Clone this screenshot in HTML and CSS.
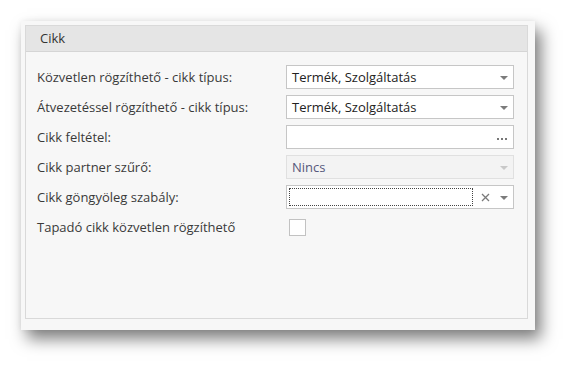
FILE: index.html
```html
<!DOCTYPE html>
<html lang="hu">
<head>
  <meta charset="UTF-8" />
  <title>Cikk beállítások</title>
  <link rel="stylesheet" href="styles.css">
</head>
<body>
  <div class="window">
    <div class="group">
      <div class="group-header">Cikk</div>
      <div class="form">
        <label class="label">Közvetlen rögzíthető - cikk típus:</label>
        <div class="field">
          <span class="value">Termék, Szolgáltatás</span>
          <span class="arrow"></span>
        </div>

        <label class="label">Átvezetéssel rögzíthető - cikk típus:</label>
        <div class="field">
          <span class="value">Termék, Szolgáltatás</span>
          <span class="arrow"></span>
        </div>

        <label class="label">Cikk feltétel:</label>
        <div class="field">
          <span class="value"></span>
          <span class="dots"><i></i><i></i><i></i></span>
        </div>

        <label class="label">Cikk partner szűrő:</label>
        <div class="field disabled">
          <span class="value">Nincs</span>
          <span class="arrow"></span>
        </div>

        <label class="label">Cikk göngyöleg szabály:</label>
        <div class="field focused">
          <span class="value focus-rect"></span>
          <span class="clear">
            <svg width="9" height="9" viewBox="0 0 9 9"><path d="M1 1 L8 8 M8 1 L1 8" stroke="#7a7a7a" stroke-width="1.3" fill="none"/></svg>
          </span>
          <span class="arrow"></span>
        </div>

        <label class="label">Tapadó cikk közvetlen rögzíthető</label>
        <div class="check-cell">
          <span class="checkbox"></span>
        </div>
      </div>
    </div>
  </div>
</body>
</html>
```

FILE: styles.css
```css
* {
  box-sizing: border-box;
  margin: 0;
  padding: 0;
}

html,
body {
  height: 100%;
}

body {
  background: #fff;
  font-family: "Open Sans", "Noto Sans", sans-serif;
  font-size: 13px;
  color: #3a3a3a;
  padding: 21px 0 0 21px;
}

.window {
  width: 514px;
  height: 309px;
  background: #f7f7f7;
  padding: 4px 7px 11px 4px;
  box-shadow: 6px 9px 15px rgba(0, 0, 0, 0.5), 0 0 6px rgba(0, 0, 0, 0.06);
}

.group {
  height: 100%;
  border: 1px solid #d9d9d9;
  background: #f7f7f7;
}

.group-header {
  height: 26px;
  background: #e5e5e5;
  border-bottom: 1px solid #d5d5d5;
  padding: 3px 0 0 14px;
  color: #333;
}

.form {
  display: grid;
  grid-template-columns: 249px 228px;
  grid-auto-rows: 24px;
  row-gap: 6px;
  padding: 13px 0 0 11px;
}

.label {
  display: flex;
  align-items: center;
  white-space: nowrap;
}

.field {
  display: flex;
  align-items: center;
  background: #fff;
  border: 1px solid #c6c6c6;
  padding: 0 5px 0 5px;
  color: #222;
}

.value {
  flex: 1;
  white-space: nowrap;
}

.arrow {
  width: 0;
  height: 0;
  border-left: 4px solid transparent;
  border-right: 4px solid transparent;
  border-top: 4px solid #7c7c7c;
  margin-top: 1px;
}

.dots {
  display: flex;
  gap: 2px;
  margin: 3px 1px 0 0;
}

.dots i {
  width: 2px;
  height: 2px;
  background: #777;
}

.field.disabled {
  background: #f3f3f3;
  border-color: #e0e0e0;
  color: #56587c;
}

.field.disabled .arrow {
  border-top-color: #c8c8c8;
}

.field.focused {
  padding: 2px 5px 2px 2px;
}

.focus-rect {
  align-self: stretch;
  border: 1px dotted #444;
  margin-right: 8px;
}

.clear {
  display: flex;
  margin-right: 10px;
}

.check-cell {
  display: flex;
  align-items: center;
  padding-left: 3px;
}

.checkbox {
  width: 17px;
  height: 17px;
  background: #fff;
  border: 1px solid #c2c2c2;
}
```
